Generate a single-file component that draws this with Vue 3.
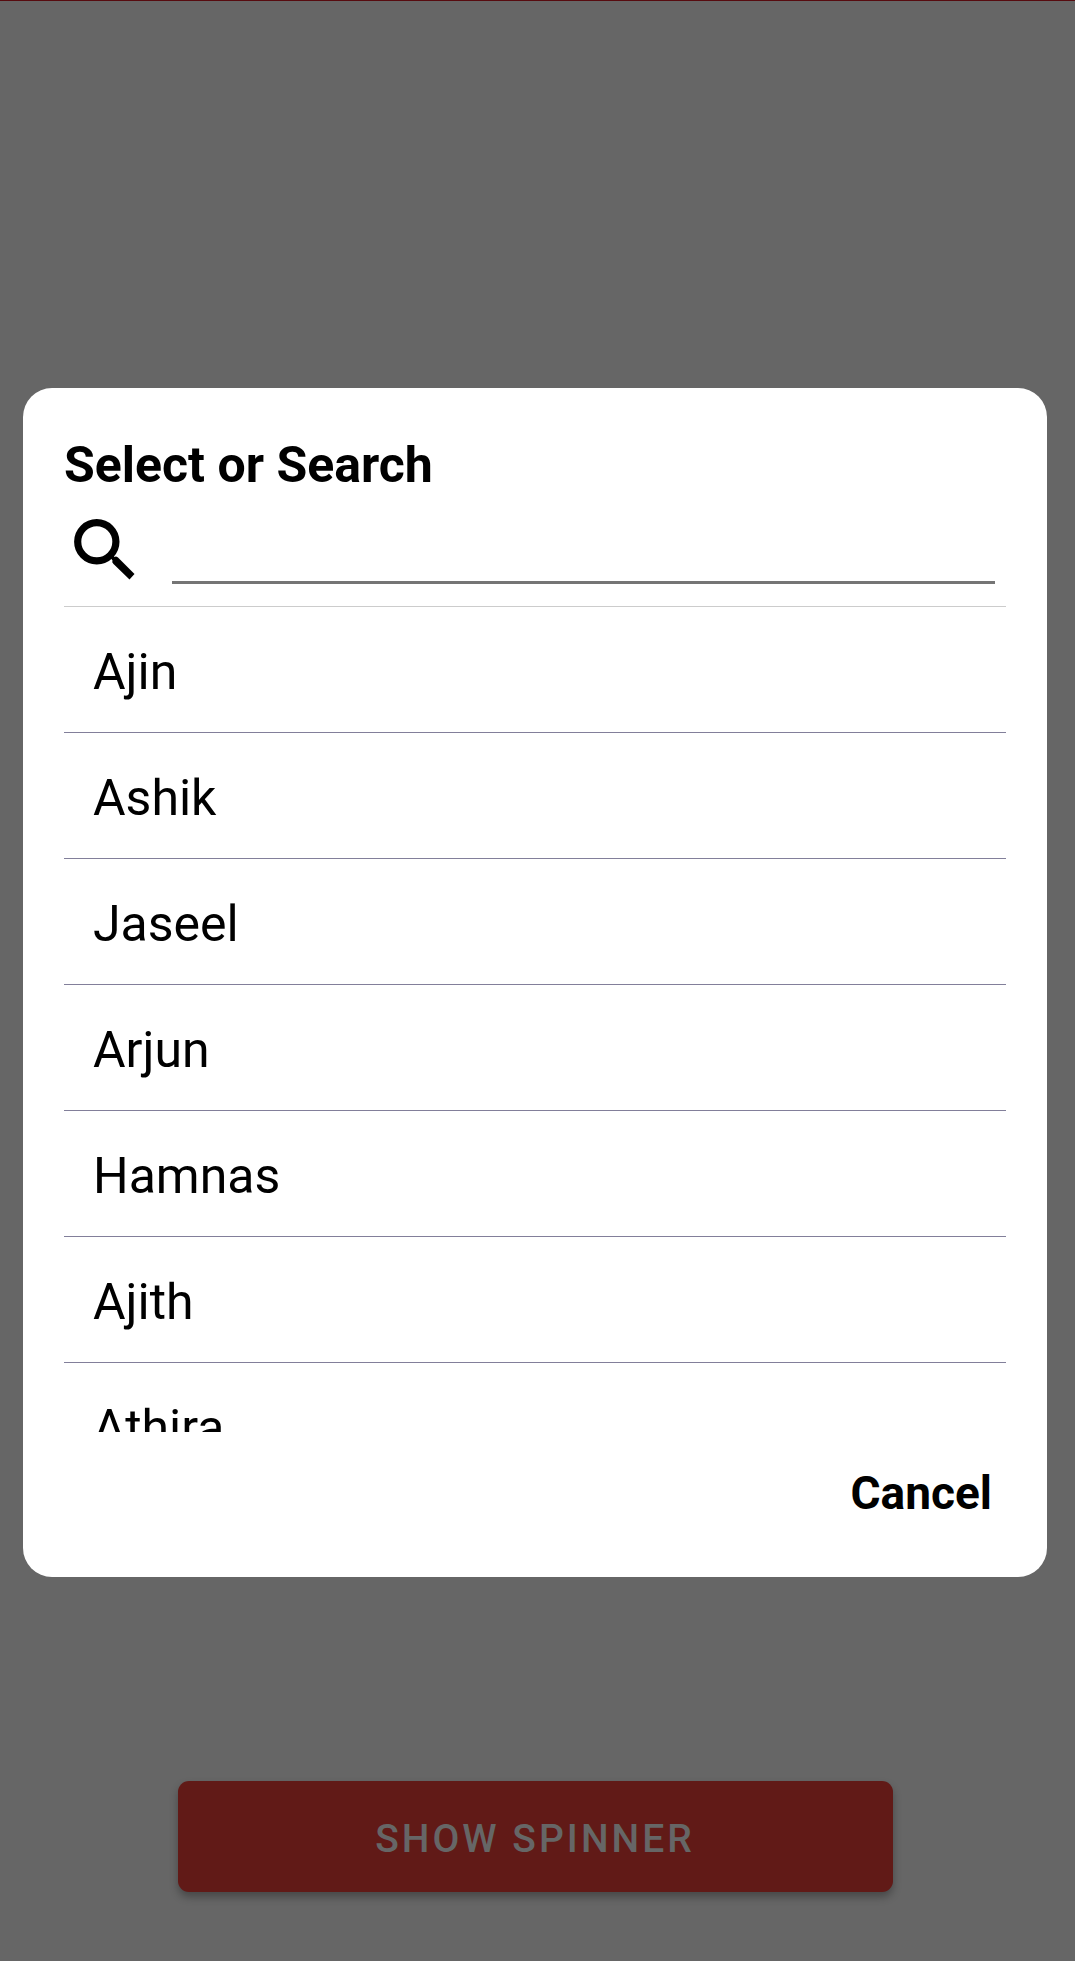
<script setup>
import { ref, computed } from 'vue'

const names = ['Ajin', 'Ashik', 'Jaseel', 'Arjun', 'Hamnas', 'Ajith', 'Athira']
const query = ref('')
const open = ref(true)
const shown = computed(() =>
  names.filter((n) => n.toLowerCase().includes(query.value.trim().toLowerCase()))
)
</script>

<template>
  <main class="screen">
    <section v-if="open" class="dialog" role="dialog" aria-labelledby="dialog-title">
      <h1 id="dialog-title" class="title">Select or Search</h1>
      <div class="search">
        <label for="query" aria-label="Search">
          <svg class="icon" viewBox="0 0 66 66" aria-hidden="true">
            <circle cx="32.8" cy="27.8" r="19.1" fill="none" stroke="#000" stroke-width="7.2" />
            <path d="M46 43L49 41L50.5 43Q52 42 54 43.5L70.5 60L65.5 65.5L49.5 50Q47.5 48 48.5 46.5Z" fill="#000" />
          </svg>
        </label>
        <input id="query" v-model="query" class="field" type="text" autocomplete="off" />
      </div>
      <ul class="list">
        <li v-for="name in shown" :key="name" class="item">
          <button class="option" type="button">{{ name }}</button>
        </li>
      </ul>
      <button class="cancel" type="button" @click="open = false">Cancel</button>
    </section>
    <button class="show" type="button" @click="open = true">Show Spinner</button>
  </main>
</template>

<style>
body {
  background: #666;
}
</style>

<style scoped>
.screen {
  box-sizing: border-box;
  min-height: 100vh;
  padding: 387px 28px 69px 23px;
  border-top: 1px solid #570b0f;
  display: flex;
  flex-direction: column;
  align-items: center;
  background: #666;
  font-family: Roboto, sans-serif;
  color: #000;
}
button {
  margin: 0;
  padding: 0;
  border: 0;
  background: none;
  font-family: inherit;
  color: inherit;
  cursor: pointer;
}
.dialog {
  box-sizing: border-box;
  width: 100%;
  padding: 47px 41px 55px;
  border-radius: 29px;
  background: #fff;
  display: flex;
  flex-direction: column;
}
.title {
  margin: 0;
  font-size: 50px;
  line-height: 60px;
  font-weight: 700;
}
.search {
  height: 111px;
  border-bottom: 1px solid #ccc;
  display: flex;
  gap: 42px;
}
.icon {
  display: block;
  width: 66px;
  height: 66px;
  margin-top: 19px;
  overflow: visible;
}
.field {
  box-sizing: border-box;
  flex: 1;
  min-width: 0;
  height: 89px;
  margin-right: 11px;
  padding: 0;
  border: 0;
  border-bottom: 3px solid #757575;
  outline: 0;
  background: none;
  font: 50px Roboto, sans-serif;
}
.list {
  height: 825px;
  margin: 0;
  padding: 0;
  overflow: hidden;
  list-style: none;
}
.item {
  border-bottom: 1px solid #827f9a;
}
.option {
  display: block;
  width: 100%;
  height: 125px;
  padding: 5px 29px 0;
  text-align: left;
  font-size: 50px;
  line-height: 60px;
}
.cancel {
  align-self: flex-end;
  margin: 32px 14px 0 0;
  font-size: 46px;
  line-height: 58px;
  font-weight: 700;
}
.show {
  width: 70%;
  max-width: 715px;
  height: 111px;
  margin-top: auto;
  padding-top: 4px;
  border-radius: 11px;
  background: #611a17;
  box-shadow: 0 5px 8px rgba(0, 0, 0, 0.3);
  color: #666;
  font-size: 39px;
  font-weight: 500;
  letter-spacing: 3px;
  text-transform: uppercase;
}
</style>
